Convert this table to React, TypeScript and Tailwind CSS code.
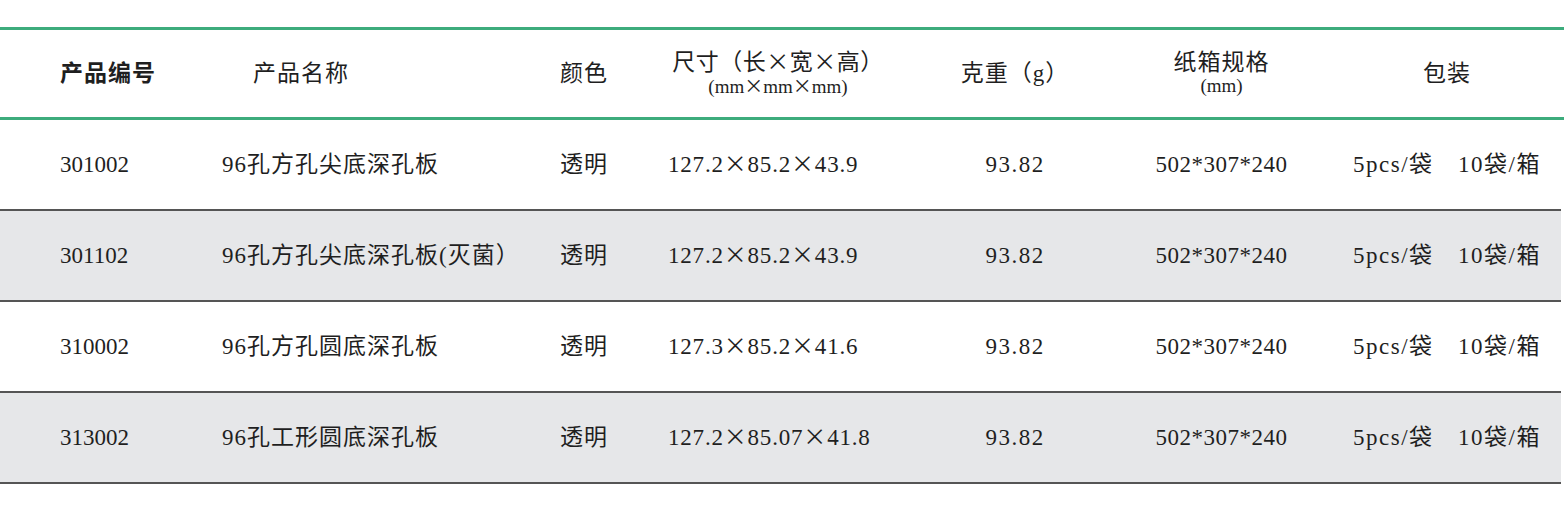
const rows = [
  { code: "301002", name: "96孔方孔尖底深孔板", color: "透明", size: "127.2×85.2×43.9", weight: "93.82", box: "502*307*240", gray: false },
  { code: "301102", name: "96孔方孔尖底深孔板(灭菌）", color: "透明", size: "127.2×85.2×43.9", weight: "93.82", box: "502*307*240", gray: true },
  { code: "310002", name: "96孔方孔圆底深孔板", color: "透明", size: "127.3×85.2×41.6", weight: "93.82", box: "502*307*240", gray: false },
  { code: "313002", name: "96孔工形圆底深孔板", color: "透明", size: "127.2×85.07×41.8", weight: "93.82", box: "502*307*240", gray: true },
];

const grid = "grid grid-cols-[222px_338px_108px_272px_150px_263px_211px] items-center";

// the multiplication sign is full width in the original, take it from the CJK font
function Dims({ text }: { text: string }) {
  const parts = text.split("×");
  return (
    <>
      {parts.map((p, i) => (
        <span key={i}>
          {p}
          {i < parts.length - 1 && (
            <span className="font-['Noto_Sans_CJK_SC',sans-serif] leading-none">×</span>
          )}
        </span>
      ))}
    </>
  );
}

export default function App() {
  return (
    <div className="w-[1564px] h-[515px] bg-white pt-[27px] text-[23px] leading-[28px] text-[#1f1f1f] font-['Liberation_Serif','Noto_Sans_CJK_SC',serif]">
      {/* header */}
      <div className={`${grid} h-[93px] border-y-[3px] border-[#3dac7c]`}>
        <div className="pl-[60px] font-bold tracking-[1px]">产品编号</div>
        <div className="pl-[31px] tracking-[1px]">产品名称</div>
        <div className="tracking-[1px]">颜色</div>
        <div className="w-[220px] text-center leading-[24px] whitespace-nowrap">
          <div className="tracking-[0.5px]">
            <Dims text="尺寸（长×宽×高）" />
          </div>
          <div className="text-[19px] leading-[22px]">
            <Dims text="(mm×mm×mm)" />
          </div>
        </div>
        <div className="text-center tracking-[1px]">克重（g）</div>
        <div className="text-center leading-[24px]">
          <div className="tracking-[1px]">纸箱规格</div>
          <div className="text-[19px] leading-[22px]">(mm)</div>
        </div>
        <div className="pl-[70px] tracking-[1px]">包装</div>
      </div>

      {/* body */}
      {rows.map((r) => (
        <div
          key={r.code}
          className={`${grid} w-[1561px] h-[91px] border-b-2 border-[#555555] ${r.gray ? "bg-[#e6e7e9]" : "bg-white"}`}
        >
          <div className="pl-[60px]">{r.code}</div>
          <div className="tracking-[1px]">{r.name}</div>
          <div className="tracking-[1px]">{r.color}</div>
          <div className="tracking-[0.8px]">
            <Dims text={r.size} />
          </div>
          <div className="text-center tracking-[1.5px]">{r.weight}</div>
          <div className="text-center tracking-[0.5px]">{r.box}</div>
          <div className="tracking-[1.5px] whitespace-nowrap">5pcs/袋　10袋/箱</div>
        </div>
      ))}
    </div>
  );
}
